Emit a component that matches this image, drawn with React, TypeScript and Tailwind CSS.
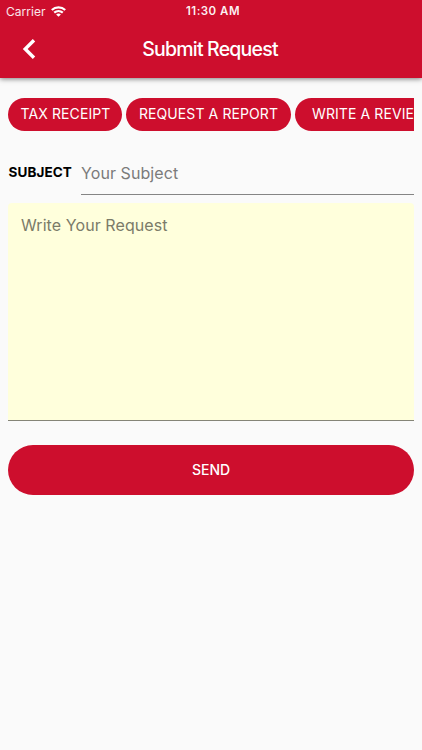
const pill =
  'flex h-[33px] shrink-0 items-center justify-center whitespace-nowrap rounded-full bg-[#cd0e2d] pb-[2px] text-white';

export default function App() {
  return (
    <div className="flex h-[750px] w-[422px] flex-col overflow-hidden bg-[#fafafa] font-['Inter',sans-serif]">
      <header className="relative z-10 h-[78px] shrink-0 bg-[#cd0e2d] text-white shadow-[0_1px_5px_rgba(0,0,0,0.5)]">
        <div className="grid h-[21px] grid-cols-[1fr_60px_1fr] items-center px-[6px]">
          <div className="flex items-center gap-[5px]">
            <span className="text-[12px] leading-[21px] tracking-[0.05px] text-white/90">Carrier</span>
            <svg width="15" height="11" viewBox="0 0 15 11" fill="none" stroke="currentColor" strokeWidth="2.2">
              <path d="M.8 4C4.6.4 10.4.4 14.2 4" />
              <path d="M3.2 6.7C5.7 4.5 9.3 4.5 11.8 6.7" />
              <path d="M7.5 10.8 5.1 8.4Q7.5 6.5 9.9 8.4Z" fill="currentColor" stroke="none" />
            </svg>
          </div>
          <span className="whitespace-nowrap pl-[4px] pt-px text-center text-[11.5px] font-semibold leading-[21px] tracking-[0.5px] text-white/95">11:30 AM</span>
        </div>
        <div className="grid h-[57px] grid-cols-[60px_1fr_60px] items-center">
          <svg className="mb-[2px] ml-[22px]" width="15" height="22" viewBox="0 0 15 22" fill="none" stroke="currentColor" strokeWidth="3.4">
            <path d="M12 2.2 3.2 11l8.8 8.8" />
          </svg>
          <h1 className="whitespace-nowrap pr-[2px] pt-px text-center text-[19.5px] font-medium tracking-[-0.8px]">Submit Request</h1>
        </div>
      </header>
      <main className="flex flex-col px-2 pt-5">
        <div className="flex gap-1 overflow-hidden text-[14px] tracking-[0.1px]">
          <button className={`${pill} w-[114px] pl-px`}>TAX RECEIPT</button>
          <button className={`${pill} w-[165px]`}>REQUEST A REPORT</button>
          <button className={`${pill} w-[150px]`}>WRITE A REVIEW</button>
        </div>
        <div className="mt-[20px] flex h-[44px]">
          <label className="w-[73px] pl-[0.5px] pt-[11px] text-[13.5px] font-bold leading-[20px] tracking-[0.1px] text-black">SUBJECT</label>
          <div className="flex-1 border-b border-[#858585] pt-[11px] text-[16px] leading-[22px] tracking-[0.08px] text-[#7b7b7b]">
            Your Subject
          </div>
        </div>
        <div className="mt-2 h-[218px] rounded-t-[4px] border-b border-[#858577] bg-[#ffffdc] px-[13px] pt-[11px] text-[16px] leading-[22px] tracking-[0.08px] text-[#7b7b69]">
          Write Your Request
        </div>
        <button className="mt-[24px] h-[50px] rounded-full bg-[#cd0e2d] pb-px text-[14px] font-medium text-white">SEND</button>
      </main>
    </div>
  );
}
